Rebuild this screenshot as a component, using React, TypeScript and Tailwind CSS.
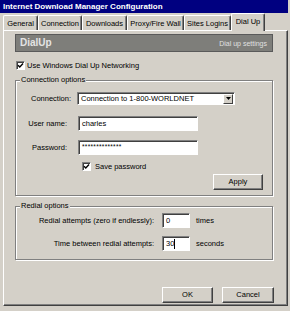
import type { ReactNode } from 'react'

const tabs = [
  { label: 'General', w: 'w-[35px]' },
  { label: 'Connection', w: 'w-[44px]' },
  { label: 'Downloads', w: 'w-[45px]' },
  { label: 'Proxy/Fire Wall', w: 'w-[57px]' },
  { label: 'Sites Logins', w: 'w-[47px]' },
]

function Field({ children, className }: { children: ReactNode; className: string }) {
  return (
    <div
      className={`flex items-center bg-white border-t border-l border-t-[#808080] border-l-[#808080] border-b border-r border-b-white border-r-white shadow-[inset_1px_1px_0_#404040] pl-[3px] ${className}`}
    >
      {children}
    </div>
  )
}

function Button({ label, className }: { label: string; className: string }) {
  return (
    <button
      className={`flex items-center justify-center bg-[#d4d0c8] border-t border-l border-t-white border-l-white border-b border-r border-b-[#404040] border-r-[#404040] shadow-[inset_-1px_-1px_0_#808080] ${className}`}
    >
      {label}
    </button>
  )
}

function CheckBox() {
  return (
    <span className="flex items-center justify-center w-[9px] h-[9px] shrink-0 bg-white border-t border-l border-t-[#808080] border-l-[#808080] border-b border-r border-b-white border-r-white shadow-[inset_1px_1px_0_#404040]">
      <svg width="7" height="7" viewBox="0 0 7 7">
        <path d="M1 3.2 L2.8 5 L6 1.6" stroke="#000" strokeWidth="1.4" fill="none" />
      </svg>
    </span>
  )
}

function Group({ title, className, children }: { title: string; className: string; children: ReactNode }) {
  return (
    <div
      className={`relative flex flex-col border border-[#808080] shadow-[1px_1px_0_#fff,inset_1px_1px_0_#fff] ${className}`}
    >
      <span className="absolute left-[4px] top-[-6px] bg-[#d4d0c8] px-[1px] leading-[10px] whitespace-nowrap">
        {title}
      </span>
      {children}
    </div>
  )
}

export default function App() {
  return (
    <div className="w-[290px] h-[311px] overflow-hidden bg-[#d4d0c8] text-black text-[7.5px] leading-none font-['Liberation_Sans',Arial,sans-serif]">
      <div className="flex items-center h-[13px] w-[288px] bg-[#000080] pl-[3px] text-white font-bold text-[8px] whitespace-nowrap">
        Internet Download Manager Configuration
      </div>

      {/* tab strip */}
      <div className="flex items-end h-[17px] pl-[3px]">
        {tabs.map((t) => (
          <div
            key={t.label}
            className={`flex items-center justify-center h-[15px] pt-[2px] ${t.w} border-t border-l border-t-white border-l-white border-r border-r-[#404040] shadow-[inset_-1px_0_0_#808080] rounded-t-[2px] whitespace-nowrap`}
          >
            {t.label}
          </div>
        ))}
        <div className="relative z-10 flex items-center justify-center h-[18px] mb-[-1px] w-[34px] bg-[#d4d0c8] border-t border-l border-t-white border-l-white border-r border-r-[#404040] shadow-[inset_-1px_0_0_#808080] rounded-t-[2px] pb-[2px] whitespace-nowrap">
          Dial Up
        </div>
      </div>

      {/* tab page */}
      <div className="flex flex-col ml-[3px] w-[285px] h-[276px] border-t border-l border-t-white border-l-white border-r border-b border-r-[#404040] border-b-[#404040] shadow-[inset_-1px_-1px_0_#808080]">
        <div className="flex items-center justify-between mt-[3px] ml-[11px] w-[258px] h-[18px] shrink-0 bg-[#7e7e7a] border border-[#5a5a5a] px-[4px]">
          <span className="text-[10px] font-bold text-[#e4e4e4]">DialUp</span>
          <span className="text-[7px] text-[#e0e0e0] pr-[1px]">Dial up settings</span>
        </div>

        <div className="flex items-center gap-[2px] mt-[9px] ml-[12px]">
          <CheckBox />
          <span>Use Windows Dial Up Networking</span>
        </div>

        <Group title="Connection options" className="mt-[10px] ml-[11px] w-[258px] h-[116px] shrink-0">
          <div className="flex items-center mt-[11px]">
            <span className="w-[55px] text-right">Connection:</span>
            <div className="flex items-center ml-[6px] w-[158px] h-[13px] bg-white border-t border-l border-t-[#808080] border-l-[#808080] border-b border-r border-b-white border-r-white shadow-[inset_1px_1px_0_#404040]">
              <span className="flex-1 pl-[3px] whitespace-nowrap">Connection to 1-800-WORLDNET</span>
              <span className="flex items-center justify-center w-[10px] h-[10px] mr-[1px] bg-[#d4d0c8] border-t border-l border-t-white border-l-white border-b border-r border-b-[#404040] border-r-[#404040]">
                <svg width="5" height="3" viewBox="0 0 5 3">
                  <path d="M0 0 H5 L2.5 3 Z" fill="#000" />
                </svg>
              </span>
            </div>
          </div>

          <div className="flex items-center mt-[11px]">
            <span className="w-[51px] text-right">User name:</span>
            <Field className="ml-[11px] w-[120px] h-[15px]">charles</Field>
          </div>

          <div className="flex items-center mt-[9px]">
            <span className="w-[51px] text-right">Password:</span>
            <Field className="ml-[11px] w-[120px] h-[15px] text-[6.5px] tracking-[0.3px]">**************</Field>
          </div>

          <div className="flex items-center gap-[4px] mt-[7px] ml-[66px]">
            <CheckBox />
            <span>Save password</span>
          </div>

          <Button label="Apply" className="mt-[3px] ml-[197px] w-[50px] h-[16px]" />
        </Group>

        <Group title="Redial options" className="mt-[10px] ml-[11px] w-[258px] h-[54px] shrink-0">
          <div className="flex items-center mt-[6px]">
            <span className="w-[138px] text-right whitespace-nowrap">Redial attempts (zero if endlessly):</span>
            <Field className="ml-[8px] w-[28px] h-[15px]">0</Field>
            <span className="ml-[6px]">times</span>
          </div>
          <div className="flex items-center mt-[8px]">
            <span className="w-[138px] text-right whitespace-nowrap">Time between redial attempts:</span>
            <Field className="ml-[8px] w-[28px] h-[15px]">
              30<span className="w-px h-[10px] bg-black" />
            </Field>
            <span className="ml-[6px]">seconds</span>
          </div>
        </Group>

        <div className="flex gap-[9px] mt-[27px] ml-[158px]">
          <Button label="OK" className="w-[51px] h-[16px]" />
          <Button label="Cancel" className="w-[52px] h-[16px]" />
        </div>
      </div>
    </div>
  )
}
